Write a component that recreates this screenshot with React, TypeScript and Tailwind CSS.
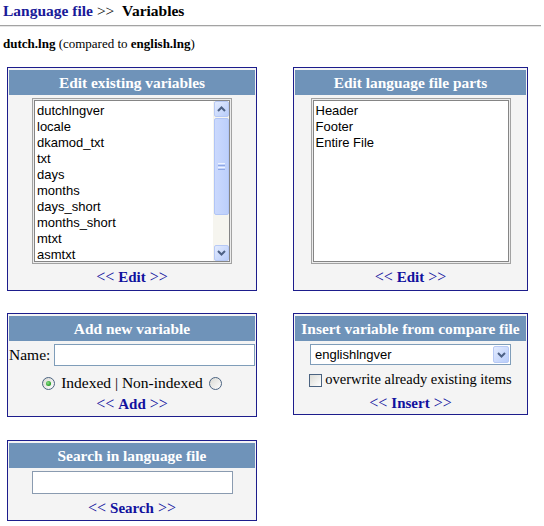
import React from "react";

const serif = "font-['Liberation_Serif','Times_New_Roman',serif]";
const sans = "font-['Liberation_Sans',Arial,sans-serif]";

function Chevron({ up }: { up?: boolean }) {
  return (
    <svg width="9" height="6" viewBox="0 0 9 6">
      <path
        d={up ? "M1 5 L4.5 1.5 L8 5" : "M1 1 L4.5 4.5 L8 1"}
        fill="none"
        stroke="#4d6185"
        strokeWidth="2"
      />
    </svg>
  );
}

function SBButton({ up }: { up?: boolean }) {
  return (
    <div className="flex h-[16px] w-[15px] items-center justify-center rounded-[2px] border border-[#b7c9f5] bg-gradient-to-br from-[#e3ebfe] to-[#b9cdfa]">
      <Chevron up={up} />
    </div>
  );
}

function Scrollbar() {
  return (
    <div className="flex h-full w-[16px] flex-col items-center bg-[#f6f5ef]">
      <SBButton up />
      <div className="mt-[1px] flex h-[97px] w-[15px] flex-col items-center justify-center gap-[1px] rounded-[2px] border border-[#b1c5f6] bg-gradient-to-r from-[#cbd9fd] to-[#bccffb]">
        <div className="h-[1px] w-[7px] bg-[#eef3ff]" />
        <div className="h-[1px] w-[7px] bg-[#8fa8e6]" />
        <div className="h-[1px] w-[7px] bg-[#eef3ff]" />
        <div className="h-[1px] w-[7px] bg-[#8fa8e6]" />
      </div>
      <div className="flex-1" />
      <SBButton />
    </div>
  );
}

function ListBox({ items, scroll }: { items: string[]; scroll?: boolean }) {
  return (
    <div className="mx-auto mt-[3px] h-[166px] w-[200px] border border-[#a2a2a2] bg-[#ececec] p-[1px]">
      <div className={`flex h-full border border-[#858585] bg-white ${sans} text-[13px] text-black`}>
        <div className="flex-1 pt-[2px]">
          {items.map((it) => (
            <div key={it} className="h-[16px] whitespace-nowrap pl-[2px] leading-[16px]">
              {it}
            </div>
          ))}
        </div>
        {scroll && <Scrollbar />}
      </div>
    </div>
  );
}

function Header({ children }: { children: React.ReactNode }) {
  return (
    <div className="h-[25px] whitespace-nowrap bg-[#6f93b9] text-center text-[15.4px] font-bold leading-[25px] text-white">
      {children}
    </div>
  );
}

function LinkLine({ word, className = "" }: { word: string; className?: string }) {
  return (
    <div className={`h-[18px] text-center leading-[18px] text-[#11119e] ${className}`}>
      <span className="text-[16px]">&lt;&lt; </span>
      <span className="text-[15px] font-bold">{word}</span>
      <span className="text-[16px]"> &gt;&gt;</span>
    </div>
  );
}

function Radio({ checked }: { checked?: boolean }) {
  return (
    <svg width="13" height="13" viewBox="0 0 13 13">
      <defs>
        <linearGradient id="rg" x1="0" y1="0" x2="1" y2="1">
          <stop offset="0" stopColor="#d8d8d2" />
          <stop offset="1" stopColor="#ffffff" />
        </linearGradient>
        <radialGradient id="dot" cx="0.4" cy="0.4" r="0.6">
          <stop offset="0" stopColor="#8fe08f" />
          <stop offset="1" stopColor="#1f9a1f" />
        </radialGradient>
      </defs>
      <circle cx="6.5" cy="6.5" r="6" fill="url(#rg)" stroke="#4b6380" strokeWidth="1" />
      {checked && <circle cx="6.5" cy="6.5" r="2.5" fill="url(#dot)" />}
    </svg>
  );
}

function Box({
  width,
  children,
  className = "",
}: {
  width: string;
  children: React.ReactNode;
  className?: string;
}) {
  return (
    <div className={`${width} border border-[#1d1d8c] bg-[#f4f4f4] px-[1px] pt-[2px] ${className}`}>
      {children}
    </div>
  );
}

export default function App() {
  const vars = [
    "dutchlngver",
    "locale",
    "dkamod_txt",
    "txt",
    "days",
    "months",
    "days_short",
    "months_short",
    "mtxt",
    "asmtxt",
  ];
  return (
    <div className={`h-[526px] w-[544px] overflow-hidden bg-white text-black ${serif}`}>
      <div className="h-[20px] pl-[3px] pt-[1px] text-[15.5px] leading-[20px]">
        <span className="font-bold text-[#1a1a99]">Language file</span>
        <span> &gt;&gt; </span>
        <span className="font-bold">&nbsp;Variables</span>
      </div>
      <div className="mt-[5px] w-[541px] border-t border-b border-t-[#a3a3a3] border-b-[#e6e6e6]" />
      <div className="mt-[9px] h-[16px] pl-[3px] text-[13px] leading-[16px]">
        <span className="font-bold">dutch.lng</span> (compared to{" "}
        <span className="font-bold">english.lng</span>)
      </div>

      <div className="ml-[7px] mt-[15px] flex items-start gap-[36px]">
        <Box width="w-[250px]" className="pb-[4px]">
          <Header>Edit existing variables</Header>
          <ListBox items={vars} scroll />
          <LinkLine word="Edit" className="mt-[4px]" />
        </Box>
        <Box width="w-[235px]" className="pb-[4px]">
          <Header>Edit language file parts</Header>
          <ListBox items={["Header", "Footer", "Entire File"]} />
          <LinkLine word="Edit" className="mt-[4px]" />
        </Box>
      </div>

      <div className="ml-[7px] mt-[22px] flex items-start gap-[36px]">
        <Box width="w-[250px]" className="pb-[3px]">
          <Header>Add new variable</Header>
          <div className="mt-[2px] flex h-[24px] items-center text-[15.5px]">
            <span className="pr-[4px]">Name:</span>
            <div className="h-[22px] w-[201px] border border-[#7f9db9] bg-white" />
          </div>
          <div className="mt-[6px] flex h-[20px] items-center justify-center text-[15.5px]">
            <Radio checked />
            <span className="px-[6px]">Indexed | Non-indexed</span>
            <Radio />
          </div>
          <LinkLine word="Add" className="mt-[2px]" />
        </Box>
        <Box width="w-[235px]" className="pb-[2px]">
          <Header>Insert variable from compare file</Header>
          <div
            className={`mx-auto mt-[3px] flex h-[21px] w-[201px] items-center border border-[#7f9db9] bg-white ${sans} text-[13px]`}
          >
            <span className="flex-1 pl-[4px]">englishlngver</span>
            <div className="mr-[1px] flex h-[17px] w-[16px] items-center justify-center rounded-[2px] border border-[#b7c9f5] bg-gradient-to-br from-[#e3ebfe] to-[#b9cdfa]">
              <Chevron />
            </div>
          </div>
          <div className="mt-[6px] flex h-[18px] items-center justify-center text-[14.5px]">
            <div className="h-[13px] w-[13px] border border-[#4b6380] bg-gradient-to-br from-[#dcdcd6] to-white" />
            <span className="pl-[3px]">overwrite already existing items</span>
          </div>
          <LinkLine word="Insert" className="mt-[5px]" />
        </Box>
      </div>

      <div className="ml-[7px] mt-[23px]">
        <Box width="w-[250px]" className="pb-[3px]">
          <Header>Search in language file</Header>
          <div className="mx-auto mt-[3px] h-[23px] w-[201px] border border-[#8a9bb0] bg-white" />
          <LinkLine word="Search" className="mt-[5px]" />
        </Box>
      </div>
    </div>
  );
}
